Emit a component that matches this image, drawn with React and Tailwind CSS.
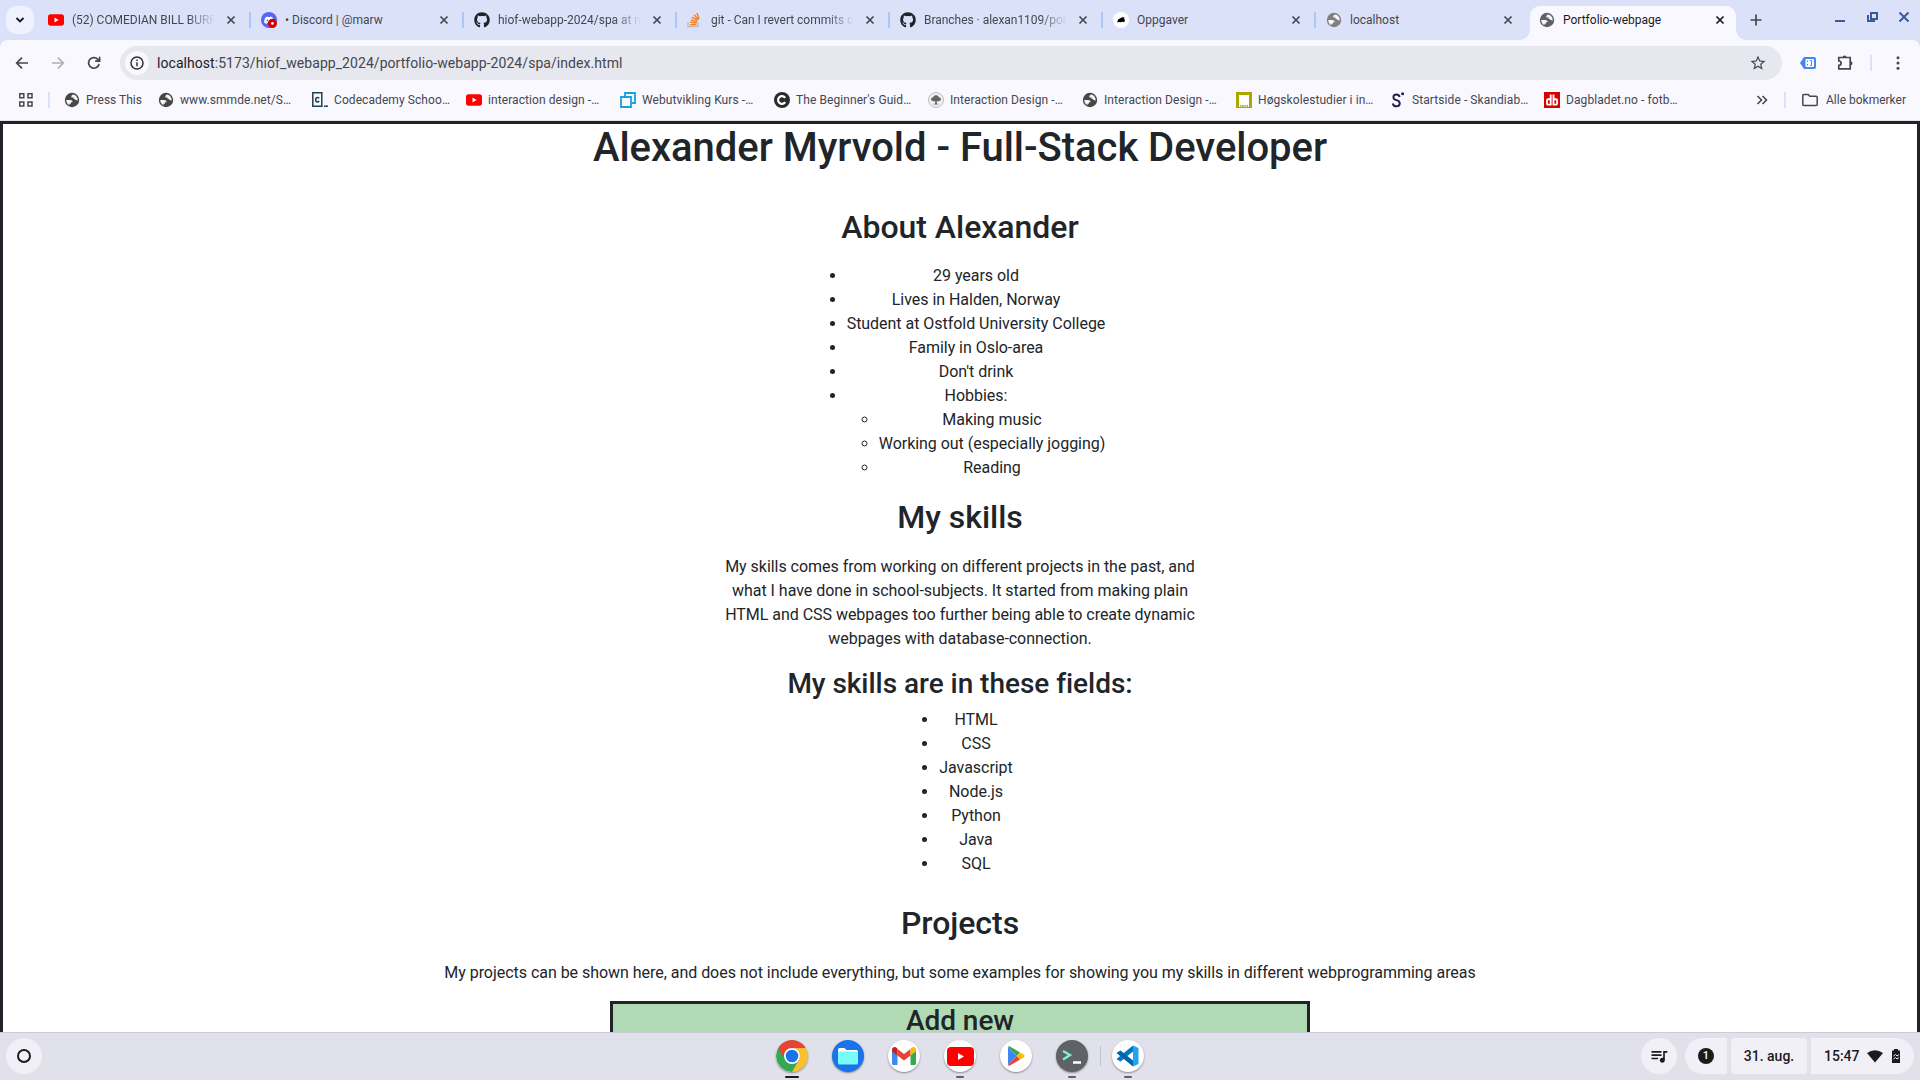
import React from 'react';
import { FaGithub, FaDiscord } from 'react-icons/fa';
import { MdQueueMusic, MdStarBorder } from 'react-icons/md';

const Globe = ({ color = '#474747' }) => (
  <svg width="16" height="16" viewBox="0 0 16 16">
    <circle cx="8" cy="8" r="7.200" fill={color} />
    <path d="M2.300 8H6c1.700 0 2.600.8 2.600 2.200H6.900v1.500H5.400v1.500A5.900 5.900 0 0 1 2.300 8zM9.300 2.400c-1.200.3-1.900.9-1.900 1.900v1.200h2.200v1.600h1.300c.4 1 1 1.400 2.800 1.400.2-2.900-1.500-5.400-4.400-6.100z" fill="#fff" opacity=".95" />
  </svg>
);
const YT = () => (
  <svg width="16" height="16" viewBox="0 0 16 16">
    <rect y="2.200" width="16" height="11.500" rx="2.600" fill="#f00" />
    <path d="M6.500 5.600v4.800l4.100-2.400z" fill="#fff" />
  </svg>
);
const Discord = () => (
  <svg width="16" height="16" viewBox="0 0 16 16">
    <circle cx="8" cy="8" r="8" fill="#5865f2" />
    <g transform="translate(2.800 3)"><FaDiscord size={10.400} color="#fff" /></g>
    <circle cx="11.400" cy="11.400" r="4.600" fill="#d60000" />
    <circle cx="11.400" cy="11.400" r="1.300" fill="#fff" />
  </svg>
);
const Stack = () => (
  <svg width="16" height="16" viewBox="0 0 16 16" fill="none">
    <path d="M1 10v4.500h10V10" stroke="#bcbbbb" strokeWidth="1.300" />
    <path d="M3 12.600h6.400M3.200 10.300l6.500.7M3.800 7.800l6.300 1.800M5 5.200l5.600 3.200M7.200 2.800l4.200 5M9.900 1l2.200 6" stroke="#f48024" strokeWidth="1.400" />
  </svg>
);
const Oppgaver = () => (
  <svg width="16" height="16" viewBox="0 0 16 16">
    <circle cx="8" cy="8" r="8" fill="#fff" />
    <path d="M4.200 10.400 5 7.600l2.200-1.400 2-1 2.300.3-.4 1.400.9 1.300-.8 2-1.700-.5-1.700.6-1.600-.4z" fill="#000" />
  </svg>
);
const Close = ({ color = '#44474f' }) => (
  <svg width="16" height="16" viewBox="0 0 16 16"><path d="m4.500 4.500 7 7m0-7-7 7" stroke={color} strokeWidth="1.700" /></svg>
);

const tabs = [
  { icon: <YT />, title: '(52) COMEDIAN BILL BURR', fade: true },
  { icon: <Discord />, title: '• Discord | @marw' },
  { icon: <FaGithub size={16} color="#1f2328" />, title: 'hiof-webapp-2024/spa at m', fade: true },
  { icon: <Stack />, title: 'git - Can I revert commits o', fade: true },
  { icon: <FaGithub size={16} color="#1f2328" />, title: 'Branches · alexan1109/por', fade: true },
  { icon: <Oppgaver />, title: 'Oppgaver' },
  { icon: <Globe color="#808080" />, title: 'localhost' },
];

const TabStrip = () => (
  <div className="flex h-10 bg-[#dce1fa] text-xs text-[#44474f]">
    <div className="mt-1.5 ml-1.5 flex size-7 items-center justify-center rounded-[10px] bg-[#eff1fd]">
      <svg width="10" height="8" viewBox="0 0 10 8" fill="none"><path d="m1.500 2 3.500 3.500L8.500 2" stroke="#1b1b1f" strokeWidth="1.900" /></svg>
    </div>
    <div className="ml-[5px] flex">
      {tabs.map((t, i) => (
        <div key={i} className="flex h-10 w-[213px] items-center pl-[9px]">
          {t.icon}
          <span className={`ml-2 w-[145px] overflow-hidden whitespace-nowrap ${t.fade ? 'tracking-[-0.03px] [mask-image:linear-gradient(to_right,black_116px,transparent_143px)]' : ''}`}>{t.title}</span>
          <span className={i === 6 ? 'ml-[5px]' : 'ml-1.5'}><Close /></span>
          {i < 6 && <span className="ml-[10px] h-4 w-0.5 bg-[#a8c7fa]" />}
        </div>
      ))}
    </div>
    <div className="flex h-10 items-end">
      <div className="-ml-[10px] size-[10px] bg-[radial-gradient(circle_at_0_0,#dce1fa_9.500px,#f9f8ff_10px)]" />
      <div className="flex h-[34px] w-[206px] items-center rounded-t-[10px] bg-[#f9f8ff] pb-1.5 pl-[9px] text-[#1b1b1f]">
        <Globe color="#5f6368" />
        <span className="ml-2 w-[141px]">Portfolio-webpage</span>
        <span className="ml-2"><Close color="#1b1b1f" /></span>
      </div>
      <div className="size-[10px] bg-[radial-gradient(circle_at_100%_0,#dce1fa_9.500px,#f9f8ff_10px)]" />
    </div>
    <svg className="mt-3 ml-1" width="16" height="16" viewBox="0 0 16 16"><path d="M6 2.500v11M.500 8h11" stroke="#44474f" strokeWidth="1.700" /></svg>
    <div className="mt-[9px] mr-2 ml-auto flex gap-4">
      <svg width="16" height="16" viewBox="0 0 16 16"><path d="M3 12h10" stroke="#3c5a99" strokeWidth="2" /></svg>
      <svg width="16" height="16" viewBox="0 0 16 16" fill="none" stroke="#3c5a99" strokeWidth="2"><path d="M7 4h6v6H7zM4 6v6h7" /></svg>
      <svg width="16" height="16" viewBox="0 0 16 16"><path d="m3.500 3.500 9 9m0-9-9 9" stroke="#3c5a99" strokeWidth="2" /></svg>
    </div>
  </div>
);

const Toolbar = () => (
  <div className="flex h-[46px] items-center">
    <svg className="ml-[14px]" width="16" height="16" viewBox="0 0 16 16" fill="none" stroke="#44474f" strokeWidth="1.700"><path d="M14 8H3M8 2.700 2.700 8 8 13.300" /></svg>
    <svg className="ml-5" width="16" height="16" viewBox="0 0 16 16" fill="none" stroke="#b0b0b6" strokeWidth="1.700"><path d="M2 8h11M8 2.700 13.300 8 8 13.300" /></svg>
    <svg className="ml-5" width="16" height="16" viewBox="0 0 16 16" fill="none" stroke="#44474f" strokeWidth="1.700"><path d="M13.100 9a5.300 5.300 0 1 1-1.300-4.700L13.600 6M13.600 1.800V6.200H9.200" /></svg>
    <div className="ml-[18px] flex h-[34px] w-[1662px] items-center rounded-full bg-[#e7e7f0] pl-[5px]">
      <div className="flex size-6 items-center justify-center rounded-full bg-[#f9f8ff]">
        <svg width="14" height="14" viewBox="0 0 14 14" fill="none" stroke="#303036" strokeWidth="1.500"><circle cx="7" cy="7" r="6" /><path d="M7 6.200v4M7 3.600v1.400" /></svg>
      </div>
      <span className="ml-2 text-sm tracking-[0.055px] text-[#44464e]"><span className="text-[#1b1b1f]">localhost</span>:5173/hiof_webapp_2024/portfolio-webapp-2024/spa/index.html</span>
      <MdStarBorder className="mr-[15px] ml-auto" size={18} color="#44474f" />
    </div>
    <svg className="ml-[18px]" width="16" height="16" viewBox="0 0 16 16"><path d="M0 8 4 2h10q2 0 2 2v8q0 2-2 2H4z" fill="#4285f4" /><rect x="5.500" y="4" width="8.500" height="8" rx="1" fill="#fff" /><path d="M7.500 5.500v1.500m0 2v1.500M10 5.500h1.500v5H10" stroke="#4285f4" fill="none" /></svg>
    <svg className="ml-5" width="18" height="18" viewBox="0 0 18 18" fill="#44474f"><path d="M2.800 3.500h11.400v11.400H2.800v-3.500q2.300-.1 2.300-2.200T2.800 7z" fill="none" stroke="#44474f" strokeWidth="1.700" /><path d="M6.500 3.500a2 2 0 0 1 4 0zM14.500 7.200a2 2 0 0 1 0 4z" /></svg>
    <span className="ml-4 h-4 w-0.5 bg-[#d7e2fb]" />
    <svg className="ml-[18px]" width="16" height="16" viewBox="0 0 16 16" fill="#44474f"><circle cx="8" cy="2.800" r="1.500" /><circle cx="8" cy="8" r="1.500" /><circle cx="8" cy="13.200" r="1.500" /></svg>
  </div>
);

const Tree = () => (
  <svg width="16" height="16" viewBox="0 0 16 16"><circle cx="8" cy="8" r="7.500" fill="#eee" stroke="#bdbdbd" /><path d="M3 7.500q0-2 2-2.300Q6 3 8 3.200q2-.2 3 2 2 .3 2 2.300-.5 2-3 1.800L8.600 9.500 9 11.500l1.500 1H5.500l1.500-1 .4-2L6 9.300q-2.500.2-3-1.800z" fill="#666" /></svg>
);
const bookmarks = [
  [<svg width="16" height="16" viewBox="0 0 16 16" fill="none" stroke="#204056"><path d="M.8.800h9v13.400h-9z" strokeWidth="1.500" /><path d="M7.200 6.400Q6.500 5.500 5.400 5.500 3.700 5.500 3.700 7.700t1.700 2.200q1.100 0 1.800-.9" strokeWidth="1.500" /><path d="M12 14.200h4" strokeWidth="1.500" /></svg>, 'Codecademy Schoo…'],
  [<YT />, 'interaction design -…'],
  [<svg width="16" height="16" viewBox="0 0 16 16" fill="none" stroke="#14a3dc" strokeWidth="1.800"><path d="M1 5h10v10H1zM5 4V1h10v10h-3" /></svg>, 'Webutvikling Kurs -…'],
  [<svg width="16" height="16" viewBox="0 0 16 16" fill="none"><circle cx="8" cy="8" r="8" fill="#2b2b2b" /><path d="M11.200 5.800A3.900 3.900 0 1 0 11.200 10.200" stroke="#fff" strokeWidth="2.200" /></svg>, "The Beginner's Guid…"],
  [<Tree />, 'Interaction Design -…'],
  [<Globe />, 'Interaction Design -…'],
  [<svg width="16" height="16" viewBox="0 0 16 16"><rect width="16" height="16" fill="#aaa900" /><path d="M3 3h10v12H3z" fill="#fff" /><path d="M4.500 13v2M6 13.500h1.500v1.500H6zM9 15v-2l1.300 1.300L11.500 13v2" stroke="#aaa900" fill="none" strokeWidth=".8" /></svg>, 'Høgskolestudier i in…'],
  [<svg width="16" height="16" viewBox="0 0 16 16" fill="none"><path d="M9.700 5Q9 2.500 6.200 2.500 3.400 2.500 3.400 5t3 3.100 3.400 3.200Q9.800 14.400 6.400 14.400 3.300 14.400 2.800 11.500" stroke="#251c4a" strokeWidth="1.900" /><circle cx="12.600" cy="1.700" r="1.500" fill="#251c4a" /></svg>, 'Startside - Skandiab…'],
  [<svg width="16" height="16" viewBox="0 0 16 16" fill="none" stroke="#fff" strokeWidth="1.900"><rect width="16" height="16" fill="#d60000" stroke="none" /><path d="M6.700 2.500v11M9.500 2.500v11M6.700 7.300H4q-1 0-1 1v3.300q0 1 1 1h2.700M9.500 7.300h2.600q1 0 1 1v3.300q0 1-1 1H9.500" /></svg>, 'Dagbladet.no - fotb…'],
];
const Bookmarks = () => (
  <div className="flex h-[34px] items-center pb-1.5 text-xs whitespace-nowrap text-[#44474f]">
    <svg className="ml-[18px]" width="16" height="16" viewBox="0 0 16 16" fill="none" stroke="#44474f" strokeWidth="1.500"><path d="M1.800 1.800h4v4h-4zM10 1.800h4v4h-4zM1.800 10h4v4h-4zM10 10h4v4h-4z" /></svg>
    <span className="ml-[14px] h-4 w-0.5 bg-[#d7e2fb]" />
    <div className="ml-[14px] flex w-[94px] items-center gap-1.5"><Globe />Press This</div>
    <div className="flex w-[154px] items-center gap-1.5 tracking-[0.06px]"><Globe />www.smmde.net/S…</div>
    {bookmarks.map(([icon, label], i) => (
      <div key={i} className="flex w-[154px] items-center gap-1.5 tracking-[0.08px]">{icon}{label}</div>
    ))}
    <svg className="ml-auto" width="12" height="12" viewBox="0 0 12 12" fill="none" stroke="#44474f" strokeWidth="1.600"><path d="m1.500 2 4 4-4 4M6.500 2l4 4-4 4" /></svg>
    <span className="ml-4 h-4 w-0.5 bg-[#d7e2fb]" />
    <svg className="ml-4" width="16" height="16" viewBox="0 0 16 16" fill="none" stroke="#44474f" strokeWidth="1.500"><path d="M.8 3.600q0-1 1-1h4.400l1.600 1.700h6.400q1 0 1 1v7.200q0 1-1 1H1.800q-1 0-1-1z" /></svg>
    <span className="mr-[14px] ml-2">Alle bokmerker</span>
  </div>
);

const Page = () => (
  <div className="h-[911px] overflow-hidden bg-white">
    <div className="flex h-[1100px] flex-col items-center border-[3px] border-[#212529] text-center text-base leading-6 tracking-[-0.035px] text-[#212529]">
      <h1 className="h-12 text-[40px] leading-[48px] font-medium">Alexander Myrvold - Full-Stack Developer</h1>
      <h2 className="mt-9 text-[32px] leading-[38px] font-medium">About Alexander</h2>
      <ul className="mt-[18px] list-disc pl-8">
        <li>29 years old</li>
        <li>Lives in Halden, Norway</li>
        <li>Student at Ostfold University College</li>
        <li>Family in Oslo-area</li>
        <li>Don't drink</li>
        <li>
          Hobbies:
          <ul className="list-[circle] pl-8">
            <li>Making music</li>
            <li>Working out (especially jogging)</li>
            <li>Reading</li>
          </ul>
        </li>
      </ul>
      <h2 className="mt-[18px] text-[32px] leading-[38px] font-medium">My skills</h2>
      <p className="mt-[19px] w-[480px]">My skills comes from working on different projects in the past, and what I have done in school-subjects. It started from making plain HTML and CSS webpages too further being able to create dynamic webpages with database-connection.</p>
      <h3 className="mt-4 text-[28px] leading-[34px] font-medium">My skills are in these fields:</h3>
      <ul className="mt-[7px] list-disc pl-8">
        {['HTML', 'CSS', 'Javascript', 'Node.js', 'Python', 'Java', 'SQL'].map((s) => <li key={s}>{s}</li>)}
      </ul>
      <h2 className="mt-7 text-[32px] leading-[38px] font-medium">Projects</h2>
      <p className="mt-[19px]">My projects can be shown here, and does not include everything, but some examples for showing you my skills in different webprogramming areas</p>
      <div className="mt-4 h-[200px] w-[700px] shrink-0 border-[3px] border-[#212529] bg-[#b0dab3]">
        <h3 className="text-[28px] leading-[34px] font-medium">Add new</h3>
      </div>
    </div>
  </div>
);

const Disc = ({ className, children, mark }) => (
  <div className="flex w-14 flex-col items-center">
    <div className={`flex size-8 items-center justify-center overflow-hidden rounded-full shadow-[0_1px_2px_rgba(0,0,0,0.4)] ${className}`}>{children}</div>
    <span className={`mt-1 h-0.5 rounded-full ${mark}`} />
  </div>
);
const small = 'w-2 bg-[#5b5e72]';
const Shelf = () => (
  <div className="flex h-12 justify-between border-t border-[#cbcbd8] bg-[#e1e1eb] text-sm font-medium text-[#1b1b1f]">
    <div className="flex w-[560px] pt-[5px] pl-1.5">
      <div className="flex size-9 items-center justify-center rounded-full bg-[#f1f0f7]"><span className="size-[14px] rounded-full border-2 border-[#1b1b1f]" /></div>
    </div>
    <div className="flex pt-[7px]">
      <Disc className="bg-white" mark="w-[14px] bg-[#1b1b1f]">
        <svg width="32" height="32" viewBox="0 0 32 32"><circle cx="16" cy="16" r="16" fill="#34a853" /><path d="M2.140 8A16 16 0 0 1 29.860 8H16a8 8 0 0 0-6.930 12z" fill="#ea4335" /><path d="M29.860 8A16 16 0 0 1 16 32l6.930-12A8 8 0 0 0 16 8z" fill="#fbc02d" /><circle cx="16" cy="16" r="8" fill="#fff" /><circle cx="16" cy="16" r="6.300" fill="#1a73e8" /></svg>
      </Disc>
      <Disc className="bg-[#1a73e8]" mark="w-2">
        <svg width="22" height="18" viewBox="0 0 22 18"><path d="M1 2.500Q1 1 2.500 1h5l2 2h10Q21 3 21 4.500V7H1z" fill="#fff" /><rect x="1" y="4.500" width="20" height="13" rx="1.500" fill="#78fbfb" /></svg>
      </Disc>
      <Disc className="bg-white" mark="w-2">
        <svg width="24" height="18" viewBox="0 0 24 18"><path d="M0 3v13.500Q0 18 1.500 18H5.500V7.500z" fill="#4285f4" /><path d="M24 3v13.500Q24 18 22.500 18h-4V7.500z" fill="#34a853" /><path d="M5.500 2 12 7l6.500-5v6.500L12 13.500 5.500 8.500z" fill="#ea4335" /><path d="M0 2.500C0 0 3-.8 4.800.9l.7.700v6.900L0 4.400z" fill="#c5221f" /><path d="M24 2.500C24 0 21-.8 19.200.9l-.7.700v6.900L24 4.400z" fill="#fbbc04" /></svg>
      </Disc>
      <Disc className="bg-white" mark={small}>
        <svg width="27" height="19" viewBox="0 0 27 19"><rect width="27" height="19" rx="4" fill="#f00" /><path d="M11 6v7l6-3.500z" fill="#fff" /></svg>
      </Disc>
      <Disc className="bg-white" mark="w-2">
        <svg width="20" height="22" viewBox="0 0 20 22"><path d="M2 2v18l9-9z" fill="#4285f4" /><path d="M2 2q.5-1.200 2-.5l10 6L11 11z" fill="#34a853" /><path d="M2 20q.5 1.200 2 .5l10-6L11 11z" fill="#ea4335" /><path d="m14 7.500 4 2.300q1.500 1.200 0 2.400l-4 2.300L10.800 11z" fill="#fbbc04" /></svg>
      </Disc>
      <Disc className="bg-[#5f6368]" mark={small}>
        <svg width="22" height="18" viewBox="0 0 22 18" fill="none"><path d="m2 4 7 4-7 4.500" stroke="#7df2cf" strokeWidth="2.400" /><path d="M12 15.500h8" stroke="#fff" strokeWidth="2.300" /></svg>
      </Disc>
      <span className="mt-1.5 -mr-px h-5 w-px bg-[#c0c0cc]" />
      <Disc className="bg-white" mark={small}>
        <svg width="24" height="24" viewBox="0 0 24 24"><path d="M17 1.500 22.500 4v16L17 22.500z" fill="#24a3f1" /><path d="M17 1.500v6L4.500 17.500 1 15.500v-1z" fill="#0076c6" /><path d="M17 22.500v-6L4.500 6.500 1 8.500v1z" fill="#0065a9" /></svg>
      </Disc>
    </div>
    <div className="flex w-[560px] justify-end pt-[5px] pr-1.5">
      <div className="mr-2 flex size-9 items-center justify-center rounded-full bg-[#f1f0f7]"><MdQueueMusic size={20} /></div>
      <div className="mr-1 flex h-9 w-[42px] items-center justify-center rounded-l-full rounded-r bg-[#f1f0f7]"><span className="flex size-4 items-center justify-center rounded-full bg-[#1b1b1f] text-[11px] text-white">1</span></div>
      <div className="mr-1 flex h-9 w-[76px] items-center justify-center rounded bg-[#f1f0f7]">31. aug.</div>
      <div className="flex h-9 w-[103px] items-center rounded-l rounded-r-full bg-[#f1f0f7] pl-[13px]">
        15:47
        <svg className="ml-1.5" width="18" height="14" viewBox="0 0 18 14"><path d="M1 4Q9-1.500 17 4L9 13.500z" fill="#1b1b1f" /></svg>
        <svg className="ml-[7px]" width="10" height="16" viewBox="0 0 10 16"><path d="M3 1h4v1.500h2v12.500H1V2.500h2z" fill="#1b1b1f" /><path d="m2.500 8 2-1.500 1.500 1.500 2-1.500M2.500 11l2-1.500L6 11l2-1.500" stroke="#f1f0f7" fill="none" /></svg>
      </div>
    </div>
  </div>
);

export default function App() {
  return (
    <div className="h-[1080px] w-[1920px] overflow-hidden bg-[#dce1fa] font-[Roboto,sans-serif]">
      <TabStrip />
      <div className="rounded-t-[8px] border-b border-[#e0e2ea] bg-[#f9f8ff]">
        <Toolbar />
        <Bookmarks />
      </div>
      <Page />
      <Shelf />
    </div>
  );
}
